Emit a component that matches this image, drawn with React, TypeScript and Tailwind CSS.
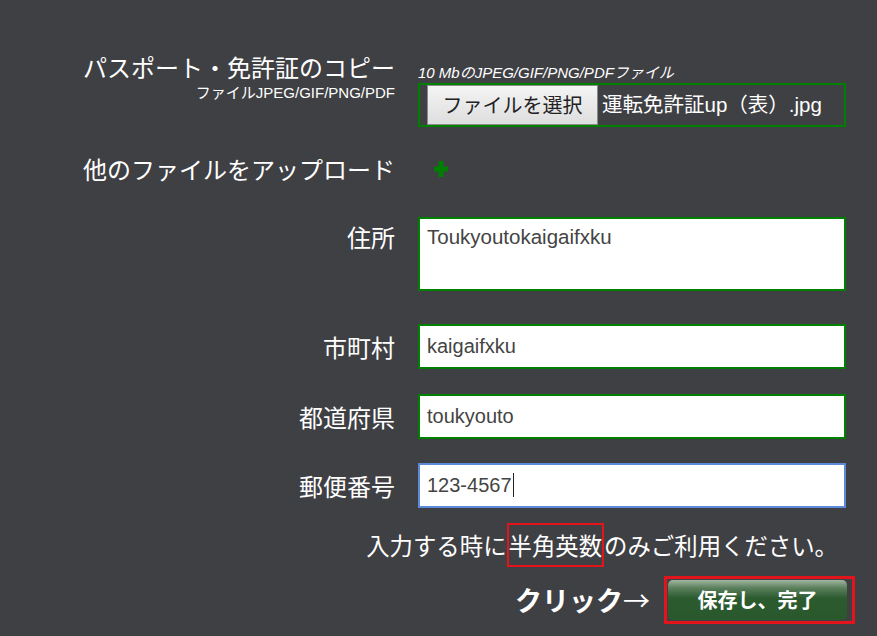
export default function App() {
  const jp = "font-['Noto_Sans_CJK_JP',sans-serif]"
  const field = "font-['Liberation_Sans','Noto_Sans_CJK_JP',sans-serif]"

  return (
    <div className={`h-[636px] w-full overflow-hidden bg-[#3f4044] text-white ${jp}`}>
      <div className="pt-[51px]">
        {/* パスポート */}
        <div className="flex">
          <div className="flex w-[395px] flex-col items-end">
            <div className="text-[24px] leading-[32px]">パスポート・免許証のコピー</div>
            <div className={`mt-[1px] text-[15px] leading-[17px] ${field}`}>ファイルJPEG/GIF/PNG/PDF</div>
          </div>
          <div className="ml-[23px] w-[428px]">
            <div className={`mt-[11px] text-[15px] italic leading-[21px] ${field}`}>
              10 MbのJPEG/GIF/PNG/PDFファイル
            </div>
            <div className="flex h-[44px] items-center border-2 border-[#008000] pl-[7px]">
              <button className="h-[40px] w-[171px] border border-[#8a8a8a] bg-linear-to-b from-[#f4f4f4] to-[#dedede] text-[20px] text-[#222]">
                ファイルを選択
              </button>
              <span className={`ml-[4px] text-[20.5px] ${field}`}>運転免許証up（表）.jpg</span>
            </div>
          </div>
        </div>

        {/* 他のファイル */}
        <div className="mt-[27px] flex h-[30px] items-center">
          <div className="w-[395px] text-right text-[24px] leading-[30px]">他のファイルをアップロード</div>
          <div className="ml-[39px]">
            <svg width="14" height="16" viewBox="0 0 14 16">
              <rect x="4.5" y="0" width="5" height="16" fill="#008000" />
              <rect x="0" y="5.5" width="14" height="5" fill="#008000" />
            </svg>
          </div>
        </div>

        {/* 住所 */}
        <div className="mt-[33px] flex items-start">
          <div className="mt-[5px] w-[395px] text-right text-[24px] leading-[30px]">住所</div>
          <div
            className={`ml-[23px] h-[74px] w-[428px] border-2 border-[#008000] bg-white px-[7px] pt-[6px] text-[20.5px] leading-[24px] text-[#444] ${field}`}
          >
            Toukyoutokaigaifxku
          </div>
        </div>

        {/* 市町村 */}
        <div className="mt-[33px] flex items-center">
          <div className="w-[395px] text-right text-[24px] leading-[30px]">市町村</div>
          <div
            className={`ml-[23px] flex h-[45px] w-[428px] items-center border-2 border-[#008000] bg-white px-[7px] pb-[2px] text-[20px] text-[#444] ${field}`}
          >
            kaigaifxku
          </div>
        </div>

        {/* 都道府県 */}
        <div className="mt-[25px] flex items-center">
          <div className="w-[395px] text-right text-[24px] leading-[30px]">都道府県</div>
          <div
            className={`ml-[23px] flex h-[45px] w-[428px] items-center border-2 border-[#008000] bg-white px-[7px] pb-[2px] text-[20px] text-[#444] ${field}`}
          >
            toukyouto
          </div>
        </div>

        {/* 郵便番号 */}
        <div className="mt-[24px] flex items-center">
          <div className="w-[395px] text-right text-[24px] leading-[30px]">郵便番号</div>
          <div
            className={`ml-[23px] flex h-[45px] w-[428px] items-center border-2 border-[#5d8ad8] bg-white px-[7px] pb-[2px] text-[20px] text-[#444] ${field}`}
          >
            123-4567
            <span className="ml-[1px] h-[24px] w-[1px] bg-[#222]" />
          </div>
        </div>

        {/* 注意 */}
        <div className="mt-[21px] w-[838px] text-right text-[23.4px] leading-[32px]">
          入力する時に<span className="border-2 border-[#e3141c] py-[3px]">半角英数</span>のみご利用ください。
        </div>

        {/* 保存 */}
        <div className="mt-[15px] flex w-[855px] items-center justify-end">
          <span className="mr-[14px] text-[27px] font-bold leading-[30px]">
            クリック<span className="font-normal">→</span>
          </span>
          <div className="border-[3px] border-[#e3141c] py-[1px] pl-[1px] pr-[5px]">
            <button className="h-[40px] w-[179px] rounded-[5px] bg-[linear-gradient(to_bottom,#a2b6a2_0%,#5b7f5c_20%,#2c5b30_45%,#2a582d_100%)] text-[20px] font-bold text-white">
              保存し、完了
            </button>
          </div>
        </div>
      </div>
    </div>
  )
}
